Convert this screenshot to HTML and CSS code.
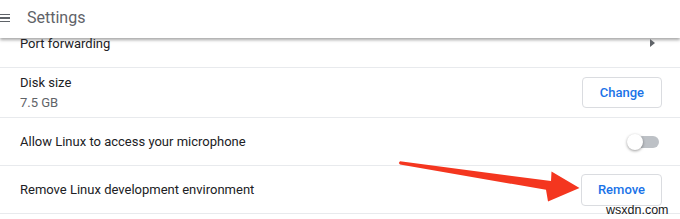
FILE: index.html
```html
<!DOCTYPE html>
<html>
<head>
<meta charset="utf-8">
<link rel="stylesheet" href="styles.css">
</head>
<body>
<div class="page">
  <header class="topbar">
    <span class="menu"><i></i><i></i><i></i></span>
    <span class="title">Settings</span>
  </header>
  <div class="list">
    <div class="row row-port">
      <span class="label">Port forwarding</span>
      <span class="chevron"></span>
    </div>
    <div class="row row-disk">
      <div class="stack">
        <span class="label">Disk size</span>
        <span class="sub">7.5 GB</span>
      </div>
      <button class="btn">Change</button>
    </div>
    <div class="row">
      <span class="label">Allow Linux to access your microphone</span>
      <span class="toggle"><span class="track"></span><span class="knob"></span></span>
    </div>
    <div class="row">
      <span class="label">Remove Linux development environment</span>
      <button class="btn">Remove</button>
    </div>
  </div>
  <svg class="arrow" width="680" height="219" viewBox="0 0 680 219">
    <polygon points="400,161.3 551,181 551.5,171.5 579.5,188 548,201.5 546,189.8 400,164.5 398.8,162.9" fill="#f4361f"/>
  </svg>
  <span class="mark">wsxdn.com</span>
</div>
</body>
</html>
```
FILE: styles.css
```css
html, body {
  margin: 0;
  padding: 0;
  background: #ffffff;
}
.page {
  position: relative;
  width: 680px;
  height: 219px;
  overflow: hidden;
  font-family: Roboto, "Liberation Sans", sans-serif;
  color: #202124;
}
.topbar {
  height: 38px;
  display: flex;
  align-items: center;
  gap: 17px;
  background: #ffffff;
  box-shadow: 0 2px 3px rgba(0, 0, 0, 0.35);
  padding-bottom: 3px;
  box-sizing: border-box;
}
.menu {
  display: flex;
  flex-direction: column;
  gap: 2px;
  width: 10px;
  margin-top: 1px;
}
.menu i {
  display: block;
  height: 1.5px;
  background: #5f6368;
}
.title {
  font-size: 16px;
  color: #5f6368;
  line-height: 20px;
}
.list {
  display: flex;
  flex-direction: column;
}
.row {
  display: flex;
  align-items: center;
  justify-content: space-between;
  height: 48px;
  box-sizing: border-box;
  padding: 0 18px 0 20px;
  border-bottom: 1px solid #e8eaed;
  font-size: 13px;
  line-height: 20px;
}
.row-port {
  margin-top: -4px;
  height: 34px;
  align-items: flex-start;
}
.row-disk {
  height: 50px;
}
.stack {
  display: flex;
  flex-direction: column;
}
.sub {
  color: #5f6368;
}
.chevron {
  width: 0;
  height: 0;
  margin: 5px 7px 0 0;
  border-top: 4px solid transparent;
  border-bottom: 4px solid transparent;
  border-left: 5px solid #5f6368;
}
.btn {
  height: 32px;
  padding: 0 16px;
  border: 1px solid #dadce0;
  border-radius: 4px;
  background: #ffffff;
  color: #1a73e8;
  font-family: Roboto, "Liberation Sans", sans-serif;
  font-size: 13px;
  font-weight: 500;
}
.row-disk .btn {
  height: 31px;
  padding: 0 17px;
  margin-top: -1px;
}
.toggle {
  position: relative;
  width: 32px;
  height: 16px;
  margin-right: 3px;
}
.track {
  position: absolute;
  left: 4px;
  top: 2px;
  width: 28px;
  height: 12px;
  border-radius: 6px;
  background: #bdc1c6;
}
.knob {
  position: absolute;
  left: 0;
  top: 0;
  width: 16px;
  height: 16px;
  border-radius: 50%;
  background: #ffffff;
  box-shadow: 0 1px 3px rgba(0, 0, 0, 0.4);
}
.arrow {
  position: absolute;
  left: 0;
  top: 0;
}
.mark {
  position: absolute;
  left: 606px;
  top: 203px;
  font-family: "Liberation Sans", Arial, sans-serif;
  font-size: 12.5px;
  line-height: 14px;
  color: #1a1a1a;
}
```
